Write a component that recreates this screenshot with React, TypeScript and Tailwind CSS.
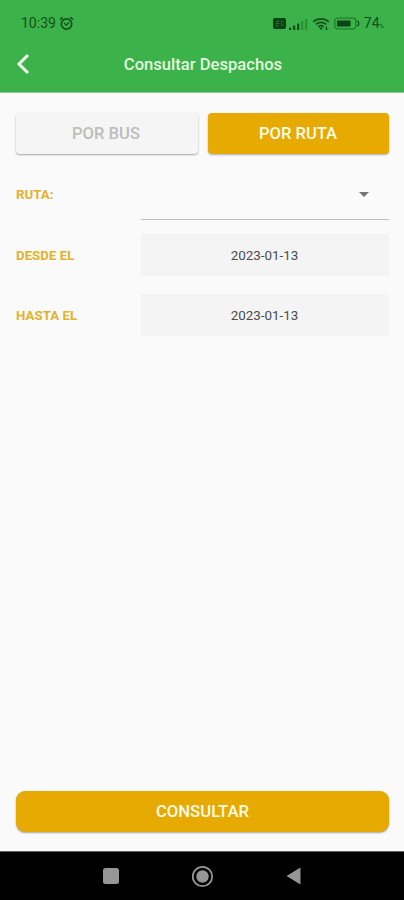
import React from 'react';

interface TabButtonProps {
  label: string;
  active?: boolean;
}

const TabButton: React.FC<TabButtonProps> = ({ label, active = false }) => (
  <button
    className={
      active
        ? 'h-[41px] w-[181px] rounded-[4px] bg-[#e6aa02] pt-px pr-px text-[16.6px] font-medium text-[#fffbe8] shadow-[0_1px_2px_rgba(0,0,0,0.3)]'
        : 'h-[41px] w-[182px] rounded-[4px] bg-[#f5f5f5] pt-px pr-[2px] text-[16.6px] font-medium text-[#bdbdbd] shadow-[0_1px_2px_rgba(0,0,0,0.35)]'
    }
  >
    {label}
  </button>
);

interface DateRowProps {
  label: string;
  value: string;
}

const DateRow: React.FC<DateRowProps> = ({ label, value }) => (
  <div className="flex h-[42px] items-center">
    <span className="w-[125px] pt-px text-[13.3px] font-bold text-[#e2b22c]">{label}</span>
    <div className="flex h-full flex-1 items-center justify-center bg-[#f4f4f4] pt-[2px] pr-px text-[13.4px] text-[#4c4c4c]">
      {value}
    </div>
  </div>
);

const StatusBar: React.FC = () => (
  <div className="flex h-[47px] items-center pl-[21px] pr-[20px] text-[14px] text-[#15501d]">
    <span>10:39</span>
    <svg className="ml-[3px]" width="15" height="15" viewBox="0 0 15 15" fill="none" stroke="currentColor">
      <circle cx="7.5" cy="8" r="5.2" strokeWidth="1.7" />
      <path d="M1 3.6 3.8 1.4M14 3.6 11.2 1.4" strokeWidth="1.7" />
      <path d="m5 7 2.3 2.2L10 6.5" strokeWidth="1.3" />
    </svg>
    <div className="ml-auto flex items-center">
      <svg width="13" height="11" viewBox="0 0 13 11">
        <rect width="13" height="11" rx="2" fill="#0d4216" />
        <path d="M3.2 3.2h2.6M3.2 5.5h3M3.2 7.8h2M8 3.7h1.8M8 5.5l2.2 2.3" stroke="#318a3d" strokeWidth="0.9" />
      </svg>
      <svg className="ml-[3px]" width="19" height="12" viewBox="0 0 19 12">
        <path d="M0 9.5h2.3V12H0zM4 7.5h2.3V12H4zM8 5.5h2.3V12H8z" fill="#15501d" />
        <path d="M12 3h2.3v9H12zM16 1h2.3v11H16z" fill="#2b903a" />
      </svg>
      <svg className="ml-[4px]" width="18" height="14" viewBox="0 0 18 14" fill="none" stroke="currentColor">
        <path d="M1.2 4.8c4.4-4 11.2-4 15.6 0M3.8 7.4c3-2.7 7.4-2.7 10.4 0M6.3 9.8c1.7-1.4 3.7-1.4 5.4 0" strokeWidth="1.7" />
        <path d="M7 10.6h4L9 13.2z" fill="currentColor" stroke="none" />
        <path d="M14.5 9v4M13 11.5l1.5 1.5 1.5-1.5" strokeWidth="1" />
      </svg>
      <svg className="ml-[4px]" width="26" height="13" viewBox="0 0 26 13">
        <rect x="0.8" y="1.2" width="21" height="10.6" rx="2.5" fill="none" stroke="#227c2f" strokeWidth="1.3" />
        <rect x="3" y="3.5" width="13.5" height="6" rx="0.5" fill="#0d4216" />
        <path d="M23 4.2c2.3 0 2.3 4.6 0 4.6" fill="none" stroke="#15501d" strokeWidth="1.3" />
      </svg>
      <span className="ml-[4px]">74</span>
      <span className="mt-[4px] text-[6px]">%</span>
    </div>
  </div>
);

const Header: React.FC = () => (
  <header className="h-[93px] border-b border-[#85cc8e] bg-[#3bb34a]">
    <StatusBar />
    <div className="grid h-[34px] grid-cols-[40px_1fr_38px] items-center">
      <svg className="ml-[16px]" width="14" height="22" viewBox="0 0 14 22" fill="none">
        <path d="M12 2 3 11l9 9" stroke="#effbe9" strokeWidth="3" />
      </svg>
      <h1 className="pt-[2px] text-center text-[16.6px] font-medium text-[#e3f8df]">Consultar Despachos</h1>
    </div>
  </header>
);

const NavigationBar: React.FC = () => (
  <nav className="flex h-[49px] items-center border-t border-[#606060] bg-black pl-[103px]">
    <svg width="16" height="16" viewBox="0 0 16 16">
      <rect width="16" height="16" rx="2.5" fill="#969696" />
    </svg>
    <svg className="ml-[72px]" width="23" height="23" viewBox="0 0 23 23">
      <circle cx="11.5" cy="11.5" r="9.7" fill="none" stroke="#969696" strokeWidth="1.8" />
      <circle cx="11.5" cy="11.5" r="6.2" fill="#969696" />
    </svg>
    <svg className="ml-[72px]" width="15" height="18" viewBox="0 0 15 18">
      <path d="M14.5.5v17L.5 9z" fill="#969696" />
    </svg>
  </nav>
);

export default function App() {
  return (
    <div className="flex h-[900px] w-[404px] flex-col bg-[#fafafa] font-[Roboto,sans-serif]">
      <Header />
      <main className="flex flex-1 flex-col pb-[19px] pl-4 pr-[15px] pt-5">
        <div className="flex justify-between">
          <TabButton label="POR BUS" />
          <TabButton label="POR RUTA" active />
        </div>
        <div className="mt-4 flex h-[50px]">
          <span className="w-[125px] pt-[15px] text-[13.3px] font-bold text-[#e2b22c]">RUTA:</span>
          <div className="flex flex-1 items-center justify-end border-b border-[#bdbdbd] pr-5">
            <svg width="10" height="5" viewBox="0 0 10 5">
              <path d="M0 0h10L5 5z" fill="#757575" />
            </svg>
          </div>
        </div>
        <div className="mt-[14px] flex flex-col gap-[18px]">
          <DateRow label="DESDE EL" value="2023-01-13" />
          <DateRow label="HASTA EL" value="2023-01-13" />
        </div>
        <button className="mt-auto h-[41px] rounded-[9px] bg-[#e6aa02] pt-px text-[16.7px] font-medium text-[#fffbe8] shadow-[0_1px_2px_rgba(0,0,0,0.35)]">
          CONSULTAR
        </button>
      </main>
      <NavigationBar />
    </div>
  );
}
